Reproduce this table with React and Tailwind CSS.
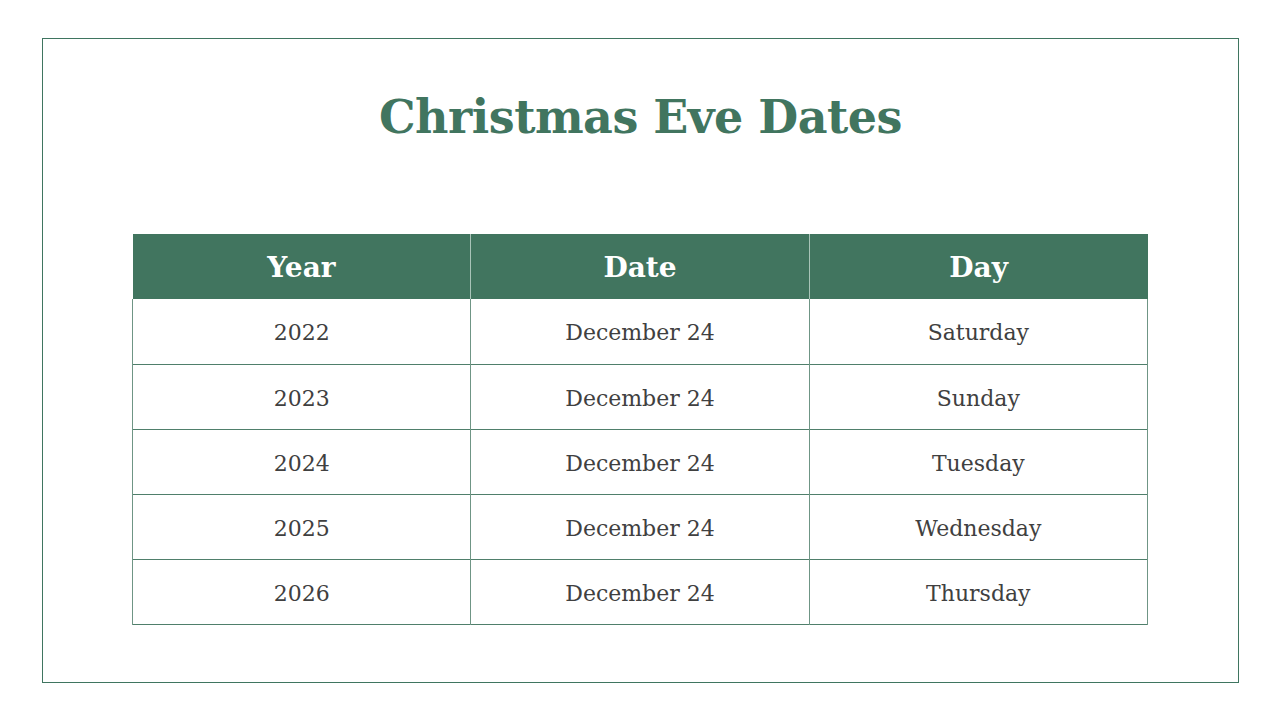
const rows = [
  ["2022", "December 24", "Saturday"],
  ["2023", "December 24", "Sunday"],
  ["2024", "December 24", "Tuesday"],
  ["2025", "December 24", "Wednesday"],
  ["2026", "December 24", "Thursday"],
];

export default function App() {
  return (
    <div className="w-[1280px] h-[720px] bg-white pt-[38px] pl-[42px] font-['DejaVu_Serif',serif]">
      <div className="w-[1197px] h-[645px] border border-[#3f7560] flex flex-col">
        <h1 className="mt-[47px] h-[62px] text-center text-[46px] leading-[62px] font-bold text-[#41755f] tracking-[-0.5px]">
          Christmas Eve Dates
        </h1>
        <table className="mt-[86px] ml-[89px] w-[1016px] border-collapse table-fixed">
          <thead>
            <tr className="bg-[#41755f] h-[65px]">
              <th className="pt-[2px] text-white text-[28px] font-bold border-r border-[#a9c4b8]">Year</th>
              <th className="pt-[2px] text-white text-[28px] font-bold border-r border-[#a9c4b8]">Date</th>
              <th className="pt-[2px] text-white text-[28px] font-bold">Day</th>
            </tr>
          </thead>
          <tbody>
            {rows.map((r) => (
              <tr key={r[0]} className="h-[65px] border-b border-[#4f7f6b]">
                {r.map((c, i) => (
                  <td
                    key={i}
                    className="pt-[3px] text-center text-[22px] text-[#404040] border-l border-r border-[#6f9585]"
                  >
                    {c}
                  </td>
                ))}
              </tr>
            ))}
          </tbody>
        </table>
      </div>
    </div>
  );
}
